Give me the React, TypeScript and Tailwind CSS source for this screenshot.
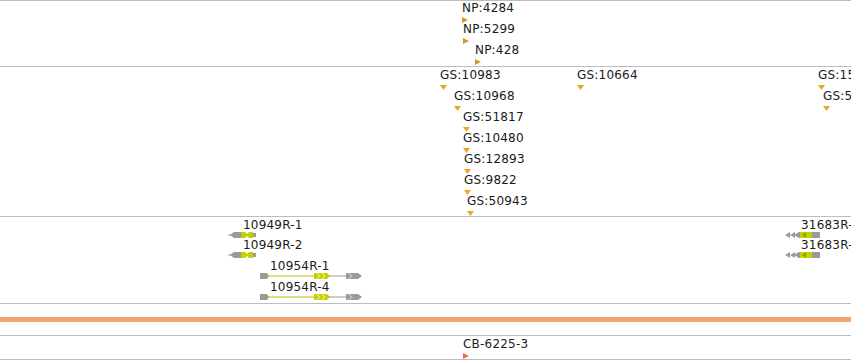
import React from 'react';

type Feat = { x: number; base: number; label: string };

const NP: Feat[] = [
  { x: 462, base: 12, label: 'NP:4284' },
  { x: 463, base: 33, label: 'NP:5299' },
  { x: 475, base: 54, label: 'NP:428' },
];

const GS: Feat[] = [
  { x: 440, base: 79, label: 'GS:10983' },
  { x: 577, base: 79, label: 'GS:10664' },
  { x: 818, base: 79, label: 'GS:15226' },
  { x: 454, base: 100, label: 'GS:10968' },
  { x: 823, base: 100, label: 'GS:50617' },
  { x: 463, base: 121, label: 'GS:51817' },
  { x: 463, base: 142, label: 'GS:10480' },
  { x: 464, base: 163, label: 'GS:12893' },
  { x: 464, base: 184, label: 'GS:9822' },
  { x: 467, base: 205, label: 'GS:50943' },
];

const GRAY = '#9a9a9a';
const LIME = '#c3d100';

// marker glyphs drawn under each label
const RightTri = ({ color }: { color: string }) => (
  <svg width="6" height="6" viewBox="0 0 6 6" className="block">
    <polygon points="0,0 6,3 0,6" fill={color} />
  </svg>
);

const DownTri = ({ color }: { color: string }) => (
  <svg width="7" height="5" viewBox="0 0 7 5" className="block">
    <polygon points="0,0 7,0 3.5,5" fill={color} />
  </svg>
);

const Label = ({ f, top, kind }: { f: Feat; top: number; kind: 'np' | 'gs' | 'cb' }) => (
  <div className="absolute" style={{ left: f.x, top: f.base - 10 - top }}>
    <div className="text-[12px] leading-[12px] tracking-[0.2px] text-[#1a1a1a] whitespace-nowrap">{f.label}</div>
    <div className={kind === 'gs' ? 'mt-[4px]' : 'mt-[3px]'}>
      {kind === 'np' && <RightTri color="#d8961c" />}
      {kind === 'gs' && <DownTri color="#f0a424" />}
      {kind === 'cb' && <RightTri color="#f26a46" />}
    </div>
  </div>
);

// reverse strand model, 28px wide
const GeneRev = () => (
  <svg width="28" height="6" viewBox="0 0 28 6" className="block">
    <rect x="0" y="2.5" width="4" height="1" fill={GRAY} />
    <polygon points="2,3 6,0 13,0 13,6 6,6" fill={GRAY} />
    <polygon points="13,0 25,0 25,6 13,6" fill={LIME} />
    <polygon points="17,0 21,0 19,2" fill="#ffffff" />
    <polygon points="17,6 21,6 19,4" fill="#ffffff" />
    <rect x="25" y="1" width="3" height="4" fill={GRAY} />
  </svg>
);

// forward strand model, 102px wide
const GeneFwd = () => (
  <svg width="102" height="6" viewBox="0 0 102 6" className="block">
    <polygon points="0,0 7,0 9,3 7,6 0,6" fill={GRAY} />
    <rect x="8" y="2.5" width="46" height="1" fill="#b4c200" />
    <rect x="54" y="0" width="13" height="6" fill={LIME} />
    <polygon points="56,0 59,3 56,6 57.5,6 60.5,3 57.5,0" fill="#e8ef88" />
    <polygon points="61,0 64,3 61,6 62.5,6 65.5,3 62.5,0" fill="#e8ef88" />
    <polygon points="67,0 70,3 67,6" fill={LIME} />
    <rect x="69" y="2.5" width="17" height="1" fill={GRAY} />
    <rect x="86" y="0" width="12" height="6" fill={GRAY} />
    <polygon points="88,0 91,3 88,6 89.5,6 92.5,3 89.5,0" fill="#cfcfcf" />
    <polygon points="98,0 102,3 98,6" fill={GRAY} />
  </svg>
);

// reverse strand model at the right edge, 35px wide
const GeneRevB = () => (
  <svg width="35" height="6" viewBox="0 0 35 6" className="block">
    <polygon points="0,3 5,0 5,6" fill={GRAY} />
    <polygon points="5,3 10,0 10,6" fill={GRAY} />
    <polygon points="9,3 14,0 15,0 15,6 14,6" fill={GRAY} />
    <polygon points="15,0 27,0 27,6 15,6" fill={LIME} />
    <polygon points="17,3 21,0.5 21,5.5" fill="#8f9a00" />
    <rect x="27" y="0" width="8" height="6" fill={GRAY} />
  </svg>
);

const genes = [
  { x: 243, gx: 228, base: 229, label: '10949R-1', G: GeneRev },
  { x: 243, gx: 228, base: 249, label: '10949R-2', G: GeneRev },
  { x: 270, gx: 260, base: 270, label: '10954R-1', G: GeneFwd },
  { x: 270, gx: 260, base: 291, label: '10954R-4', G: GeneFwd },
  { x: 801, gx: 785, base: 229, label: '31683R-1', G: GeneRevB },
  { x: 801, gx: 785, base: 249, label: '31683R-2', G: GeneRevB },
];

const Line = () => <div className="h-px bg-[#bdbdbd]" />;

export default function App() {
  return (
    <div className="relative w-[851px] h-[360px] overflow-hidden bg-white font-['DejaVu_Sans',sans-serif]">
      <Line />
      <div className="relative h-[65px]">
        {NP.map((f) => (
          <Label key={f.label} f={f} top={1} kind="np" />
        ))}
      </div>
      <Line />
      <div className="relative h-[149px]">
        {GS.map((f) => (
          <Label key={f.label} f={f} top={67} kind="gs" />
        ))}
      </div>
      <Line />
      <div className="relative h-[86px]">
        {genes.map(({ x, gx, base, label, G }) => (
          <React.Fragment key={label}>
            <div
              className="absolute text-[12px] leading-[12px] tracking-[0.2px] text-[#1a1a1a] whitespace-nowrap"
              style={{ left: x, top: base - 10 - 217 }}
            >
              {label}
            </div>
            <div className="absolute" style={{ left: gx, top: base + 3 - 217 }}>
              <G />
            </div>
          </React.Fragment>
        ))}
      </div>
      <Line />
      <div className="h-[31px] pt-[13px]">
        <div className="h-[5px] bg-[#f4a470]" />
      </div>
      <Line />
      <div className="relative h-[23px]">
        <Label f={{ x: 463, base: 348, label: 'CB-6225-3' }} top={336} kind="cb" />
      </div>
      <Line />
    </div>
  );
}
